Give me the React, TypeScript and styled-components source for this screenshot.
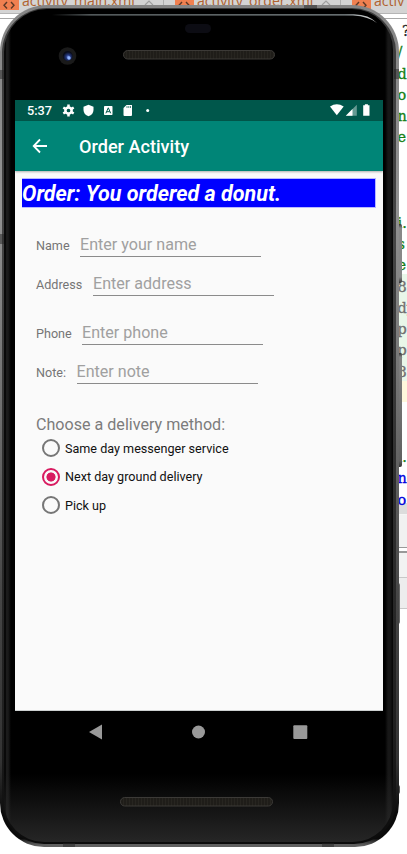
import React from "react";
import styled, { createGlobalStyle } from "styled-components";

const Global = createGlobalStyle`
  * { box-sizing: border-box; }
  body { margin: 0; background: #fff; overflow: hidden; font-family: Roboto, sans-serif; }
`;

const Desktop = styled.div`
  position: relative;
  width: 407px;
  height: 854px;
  overflow: hidden;
  background: #fff;
`;

/* ---------- editor behind the emulator ---------- */
const Tabs = styled.div`
  display: flex;
  height: 14px;
  background: #d4d4d4;
  border-bottom: 1px solid #b5b5b5;
  overflow: hidden;
`;
const Tab = styled.div<{ $w: number; $inset?: number }>`
  flex: none;
  display: flex;
  width: ${(p) => p.$w}px;
  height: 14px;
  padding-left: ${(p) => p.$inset ?? 0}px;
  border-right: 1px solid #b0b0b0;
`;
const TabIcon = styled.svg`
  flex: none;
  width: 19px;
  height: 10px;
  background: #f08050;
  margin-right: 3px;
`;
const TabName = styled.span`
  flex: 1;
  margin-top: -9px;
  font: 14.1px/20px "Open Sans", sans-serif;
  color: #b0622f;
  white-space: nowrap;
`;
const TabClose = styled.svg`
  flex: none;
  width: 12px;
  height: 8px;
  margin-right: 8px;
`;
const Ruler = styled.div`
  height: 5px;
  background: #fff;
  border-bottom: 1px solid #a8a8a8;
`;
const Code = styled.div`
  width: 12px;
  height: 484px;
  margin-left: auto;
  padding-top: 2px;
  background: linear-gradient(#fff 0 255px, #e9f7e9 255px 362px, #fff8dc 362px 383px, #fff 383px);
`;
const CodeLine = styled.div<{ $c: string }>`
  height: 21.3px;
  padding-left: 2.5px;
  white-space: pre;
  color: ${(p) => p.$c};
  font: 14.5px/20.5px "DejaVu Serif", serif;
  -webkit-text-stroke: 0.3px ${(p) => p.$c};
`;
const Pane = styled.div<{ $h: number; $bg: string; $line: string; $t?: number }>`
  height: ${(p) => p.$h}px;
  background: ${(p) => p.$bg};
  border-bottom: ${(p) => p.$t ?? 1}px solid ${(p) => p.$line};
`;

/* ---------- device ---------- */
const Phone = styled.div`
  position: absolute;
  left: 0;
  top: 5px;
  width: 399px;
  height: 842px;
  padding: 3px 3px 3px 2px;
  border-radius: 47px 47px 44px 44px;
  background: radial-gradient(ellipse 340px 10px at 50% 100%, #606060 50%, transparent),
    linear-gradient(#858585, #929292 24%, #6f6f6f 48%, #464646 70%, #333 90%, #0a0a0a 96%);
`;
const Rim = styled.div`
  height: 100%;
  padding: 1px 3px 2px 2px;
  border-radius: 45px 44px 42px 42px;
  background: linear-gradient(#3b3b3b, #444 28%, #303030 55%, #202020 85%, #0b0b0b);
`;
const Face = styled.div`
  display: flex;
  flex-direction: column;
  height: 100%;
  padding: 0 8px 0 11px;
  border-radius: 43px 41px 40px 40px;
  background: linear-gradient(transparent 765px, rgba(42, 42, 42, 0.9) 833px),
    linear-gradient(90deg, #090909 0 2px, #1b1b1b 2px 4px, #000 7px 381px, #171717 384px 386px, #050505);
`;
const Forehead = styled.div`
  flex: none;
  height: 91px;
`;
const TopArt = styled.svg`
  display: block;
  margin-left: -15px;
  width: 399px;
  height: 91px;
`;
const Screen = styled.main`
  flex: none;
  display: flex;
  flex-direction: column;
  width: 368px;
  height: 611px;
  background: #fafafa;
  border-bottom: 1px solid #ccd0d0;
`;
const StatusBar = styled.header`
  flex: none;
  display: flex;
  align-items: center;
  height: 21px;
  padding: 0 0 0 12.5px;
  background: #00574b;
  color: #fff;
  font-size: 12.7px;
  font-weight: 500;
`;
const Clock = styled.span`
  width: 33px;
  margin-left: -0.5px;
  margin-right: 0.5px;
`;
const StatusArt = styled.svg`
  width: 322px;
  height: 20px;
`;
const AppBar = styled.div`
  flex: none;
  display: flex;
  align-items: center;
  height: 50px;
  padding-left: 17px;
  background: #008577;
  box-shadow: 0 1px 2px rgba(0, 0, 0, 0.3);
`;
const BackIcon = styled.svg`
  width: 16px;
  height: 16px;
  margin-right: 31px;
`;
const Title = styled.h1`
  margin: 0;
  color: #fff;
  font-size: 18.1px;
  font-weight: 500;
`;
const OrderBanner = styled.div`
  flex: none;
  width: 354px;
  height: 30px;
  margin: 7px 0 0 7px;
  border: 1px solid #b8b8ff;
  border-left-width: 0;
  background: #00f;
  color: #fff;
  font-size: 21.5px;
  font-weight: 700;
  font-style: italic;
  line-height: 30px;
  white-space: nowrap;
`;
const Form = styled.div`
  padding: 23px 0 0 21px;
`;
const Field = styled.label<{ $gap: number }>`
  display: flex;
  align-items: baseline;
  height: 26px;
  margin-bottom: ${(p) => p.$gap}px;
`;
const Label = styled.span<{ $w: number }>`
  flex: none;
  width: ${(p) => p.$w}px;
  font-size: 12.6px;
  color: #757575;
`;
const Input = styled.input`
  width: 181px;
  height: 26px;
  padding: 1px 0 0;
  border: 0;
  border-bottom: 1px solid #8b8b8b;
  outline: 0;
  background: transparent;
  font: 16.1px Roboto, sans-serif;
  &::placeholder { color: #a0a0a0; opacity: 1; }
`;
const Legend = styled.div`
  height: 20px;
  font-size: 16.1px;
  line-height: 21px;
  color: #7c7c7c;
`;
const Choice = styled.label`
  display: flex;
  align-items: center;
  height: 28.6px;
  padding-left: 5.5px;
  font-size: 12.6px;
  color: #111;
`;
const Radio = styled.span<{ $on?: boolean }>`
  flex: none;
  width: 18px;
  height: 18px;
  margin-right: 5.5px;
  border: 2px solid ${(p) => (p.$on ? "#d81b60" : "#767676")};
  border-radius: 50%;
  background: ${(p) => (p.$on ? "radial-gradient(circle, #d81b60 4.2px, transparent 4.9px)" : "none")};
`;
const Chin = styled.svg`
  flex: none;
  display: block;
  width: 368px;
  height: 110px;
`;
const SideKey = styled.div<{ $top: number; $h: number; $c: string; $w?: number }>`
  position: absolute;
  left: 398px;
  top: ${(p) => p.$top}px;
  width: ${(p) => p.$w ?? 4}px;
  height: ${(p) => p.$h}px;
  background: ${(p) => p.$c};
  border-radius: 0 2px 2px 0;
`;
const Seam = styled.div<{ $x: number; $y: number; $w: number; $h: number }>`
  position: absolute;
  left: ${(p) => p.$x}px;
  top: ${(p) => p.$y}px;
  width: ${(p) => p.$w}px;
  height: ${(p) => p.$h}px;
  background: rgba(35, 35, 35, 0.5);
`;

const green = "#168016";
const gray = "#707070";
const lines: [string, string][] = [
  [" ?", "#222"], ["/", green], ["d", green], ["o", green], ["n", green], ["e:", green],
  ["", gray], ["", gray], ["", gray],
  ["i.", green], ["s", green], ["e", green], ["8.", gray], ["dy", gray], ["p", gray], ["p", gray], ["8.", gray],
  ["", gray], ["", gray], ["", gray],
  ["i.", green], ["n", "#0000e0"], ["o", "#0000e0"],
];
const fields: [string, string, number, number][] = [
  ["Name", "Enter your name", 44, 13],
  ["Address", "Enter address", 57, 23],
  ["Phone", "Enter phone", 46, 13],
  ["Note:", "Enter note", 40.5, 30],
];
const choices = ["Same day messenger service", "Next day ground delivery", "Pick up"];

const XmlIcon = () => (
  <TabIcon viewBox="0 0 19 10">
    <path d="M7 2L4 5.3L7 8.5M11 2L14 5.3L11 8.5" fill="none" stroke="#5c3826" strokeWidth="1.4" />
  </TabIcon>
);
const Close = () => (
  <TabClose viewBox="0 0 12 8">
    <path d="M2 5L6 1L10 5" fill="none" stroke="#a0a0a0" strokeWidth="1.2" />
  </TabClose>
);

export default function App() {
  return (
    <Desktop>
      <Global />
      <Tabs>
        <Tab $w={164}><XmlIcon /><TabName>activity_main.xml</TabName><Close /></Tab>
        <Tab $w={177} $inset={11}><XmlIcon /><TabName>activity_order.xml</TabName><Close /></Tab>
        <Tab $w={90} $inset={11}><XmlIcon /><TabName>activ</TabName></Tab>
      </Tabs>
      <Ruler />
      <Code>
        {lines.map(([t, c], i) => <CodeLine key={i} $c={c}>{t}</CodeLine>)}
      </Code>
      <Pane $h={12} $bg="#dcdcdc" $line="#f5f5f5" />
      <Pane $h={33} $bg="#f1f1f1" $line="#999" />
      <Pane $h={5} $bg="#fff" $line="#999" $t={2} />
      <Pane $h={25} $bg="#f2f2f2" $line="#c8c8c8" />
      <Pane $h={31} $bg="#ededed" $line="#c8c8c8" />

      <SideKey $top={224} $h={59} $c="linear-gradient(#333, #888 4px 53px, #333)" />
      <SideKey $top={353} $h={114} $c="linear-gradient(#333, #828282 4px, #606060 108px, #333)" />
      <SideKey $top={583} $h={41} $c="#666" $w={2} />
      <SideKey $top={785} $h={9} $c="#555" $w={2} />
      <Phone>
        <Rim>
          <Face>
            <Forehead>
              <TopArt viewBox="0 9 399 91">
                <defs>
                  <linearGradient id="shine" x1="0" x2="1">
                    <stop offset="0" stopColor="#000" />
                    <stop offset=".12" stopColor="#6c7577" />
                    <stop offset=".9" stopColor="#879194" />
                    <stop offset="1" stopColor="#ddd" />
                  </linearGradient>
                  <pattern id="mesh" width="3" height="4" patternUnits="userSpaceOnUse">
                    <rect width="3" height="4" fill="#1f1d19" />
                    <path d="M0 0v4" stroke="#2f2c27" />
                  </pattern>
                  <radialGradient id="lens" cx=".55" cy=".6">
                    <stop offset="0" stopColor="#7797ee" />
                    <stop offset=".4" stopColor="#24387f" />
                    <stop offset="1" stopColor="#090b18" />
                  </radialGradient>
                </defs>
                <path d="M52 14.2H354Q369 14.5 377 23Q369 16.5 353 15.5H52Z" fill="url(#shine)" />
                <rect x="185" y="24" width="26" height="9" rx="4.5" fill="#0c0c13" />
                <rect x="123.5" y="50.5" width="151" height="8.5" rx="4.2" fill="url(#mesh)" stroke="#3c3a37" />
                <circle cx="67.5" cy="56" r="8.8" fill="#1a1a1a" />
                <circle cx="67.7" cy="56" r="5" fill="url(#lens)" />
                <circle cx="69" cy="58" r="1.7" fill="#91b3ff" />
              </TopArt>
            </Forehead>
            <Screen>
              <StatusBar>
                <Clock>5:37</Clock>
                <StatusArt viewBox="60.5 101 322 20">
                  <g fill="#fff">
                    <circle cx="68" cy="110.5" r="3.1" fill="none" stroke="#fff" strokeWidth="2.5" />
                    <path d="M68 104.5v2.5M68 114v2.5M62.8 107.5l2.2 1.3M71 112.2l2.2 1.3M62.8 113.5l2.2-1.3M71 108.8l2.2-1.3" stroke="#fff" strokeWidth="2.5" />
                    <path d="M88 104.7L93 106.7V110C93 113 91 115.3 88 116.3C85 115.3 83 113 83 110V106.7Z" />
                    <rect x="103.5" y="106" width="8.5" height="9" rx=".7" />
                    <path d="M105.4 113.3L107.8 107.8L110.2 113.3M106.3 111.7H109.3" fill="none" stroke="#00574b" />
                    <path d="M126 105H131.5V115Q131.5 116 130.5 116H124Q123 116 123 115V108Z" />
                    <path d="M126.5 106v2M128.3 106v2M130 106v2" stroke="#00574b" strokeWidth=".7" />
                    <circle cx="147.2" cy="110.6" r="1.5" />
                    <path d="M329.5 106.5Q336.3 101.8 343.2 106.5L336.3 115.3Z" />
                    <path d="M356.3 104.8V115.8H345.3Z" opacity=".4" />
                    <path d="M352 109.1V115.8H345.3Z" />
                    <path d="M364.4 104.2H367.4V105.3H369V115.8H362.7V105.3H364.4Z" />
                  </g>
                </StatusArt>
              </StatusBar>
              <AppBar>
                <BackIcon viewBox="0 0 16 16">
                  <path d="M15 8H2M8 1.5L1.7 8L8 14.5" fill="none" stroke="#fff" strokeWidth="1.8" />
                </BackIcon>
                <Title>Order Activity</Title>
              </AppBar>
              <OrderBanner>Order: You ordered a donut.</OrderBanner>
              <Form>
                {fields.map(([l, h, w, g]) => (
                  <Field key={l} $gap={g}><Label $w={w}>{l}</Label><Input placeholder={h} /></Field>
                ))}
                <Legend>Choose a delivery method:</Legend>
                {choices.map((c, i) => <Choice key={c}><Radio $on={i === 1} />{c}</Choice>)}
              </Form>
            </Screen>
            <Chin viewBox="15 711 368 110">
              <path d="M89 732L102 724.5V739.5Z" fill="#999" />
              <circle cx="198.5" cy="732" r="6.5" fill="#999" />
              <rect x="293.3" y="725.3" width="14" height="13.7" rx="1" fill="#999" />
              <rect x="120.5" y="797.5" width="152" height="8.5" rx="4.2" fill="url(#mesh)" stroke="#3c3a37" />
            </Chin>
          </Face>
        </Rim>
      </Phone>
      <Seam $x={0} $y={70} $w={4} $h={9} />
      <Seam $x={0} $y={234} $w={4} $h={10} />
      <Seam $x={394} $y={69} $w={5} $h={10} />
      <Seam $x={304} $y={5} $w={13} $h={4} />
      <Seam $x={63} $y={843} $w={12} $h={4} />
      <Seam $x={322} $y={843} $w={12} $h={4} />
    </Desktop>
  );
}
